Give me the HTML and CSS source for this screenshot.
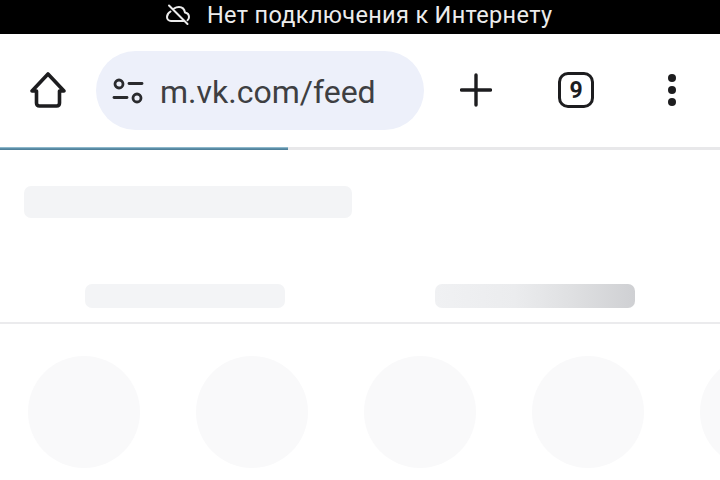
FILE: index.html
```html
<!DOCTYPE html>
<html lang="ru">
<head>
<meta charset="utf-8">
<title>m.vk.com/feed</title>
<link rel="stylesheet" href="styles.css">
</head>
<body>
<div class="status">
  <svg class="cloud" viewBox="0 0 26 26" width="26" height="26" fill="none" stroke="#ececec" stroke-width="2" stroke-linecap="round" stroke-linejoin="round">
    <path d="M5.500 7.500C3.400 8.800 2 10.800 2 13 2 15.400 3.800 17 6 17H18.500"/>
    <path d="M9 4.500C10.500 3.500 12 3 14 3 17.500 3 19.500 5.800 20 8.500 22.500 9 24 11 24 13 24 14.500 23.500 15.500 22.500 16.200"/>
    <path d="M4 1.500 22.500 20"/>
  </svg>
  <span class="status-text">Нет подключения к Интернету</span>
</div>
<header class="toolbar">
  <svg class="home" viewBox="0 0 38 38" width="38" height="38" fill="none" stroke="#1d1d1f" stroke-width="3.600" stroke-linejoin="round" stroke-linecap="round">
    <path d="M19 3 35 20H30.500V32Q30.500 35 27.500 35H10.500Q7.500 35 7.500 32V20H3Z"/>
  </svg>
  <div class="pill">
    <svg class="tune" viewBox="0 0 32 30" width="32" height="30" fill="none" stroke="#2a2b2e" stroke-width="2.800" stroke-linecap="round">
      <circle cx="7" cy="8" r="4"/>
      <path d="M17 7.500H30"/>
      <path d="M2 21.500H15"/>
      <circle cx="25" cy="22" r="4"/>
    </svg>
    <span class="url">m.vk.com/feed</span>
  </div>
  <svg class="plus" viewBox="0 0 32 34" width="32" height="34" fill="none" stroke="#1d1d1f" stroke-width="3.400" stroke-linecap="round">
    <path d="M16 2V32M1.500 17H30.500"/>
  </svg>
  <div class="tabs-count"><span>9</span></div>
  <div class="menu"><i></i><i></i><i></i></div>
</header>
<div class="progress"><div class="progress-fill"></div></div>
<main class="content">
  <div class="sk-title"></div>
  <div class="sk-tabs">
    <div class="sk-tab"></div>
    <div class="sk-tab shimmer"></div>
  </div>
  <div class="divider"></div>
  <div class="stories">
    <div class="story"></div>
    <div class="story"></div>
    <div class="story"></div>
    <div class="story"></div>
    <div class="story"></div>
  </div>
</main>
</body>
</html>
```
FILE: styles.css
```css
* { box-sizing: border-box; }
html, body { margin: 0; padding: 0; }
body {
  width: 720px;
  height: 480px;
  overflow: hidden;
  background: #fff;
  font-family: Roboto, "Liberation Sans", sans-serif;
}
.status {
  height: 34px;
  background: #000;
  display: flex;
  align-items: center;
  padding-left: 165px;
  color: #ececec;
}
.cloud { flex: none; }
.status-text {
  margin-left: 16px;
  margin-top: -4px;
  font-size: 23.500px;
  letter-spacing: 0.33px;
  white-space: nowrap;
  line-height: 28px;
}
.toolbar {
  height: 113px;
  display: flex;
  align-items: flex-start;
  padding-top: 17px;
}
.home { flex: none; margin: 20px 0 0 29px; }
.pill {
  flex: none;
  margin-left: 29px;
  width: 328px;
  height: 79px;
  border-radius: 40px;
  background: #edf0fa;
  display: flex;
  align-items: center;
  padding-left: 16px;
}
.tune { flex: none; }
.url {
  margin-left: 16px;
  margin-top: 3px;
  font-size: 32px;
  color: #3e3f42;
  white-space: nowrap;
}
.plus { flex: none; margin: 22px 0 0 36px; }
.tabs-count {
  flex: none;
  margin: 21px 0 0 66px;
  width: 36px;
  height: 36px;
  border: 3.500px solid #1d1d1f;
  border-radius: 10px;
  display: flex;
  align-items: center;
  justify-content: center;
  font-size: 23px;
  font-weight: 700;
  color: #1d1d1f;
}
.menu {
  flex: none;
  margin: 23px 0 0 74px;
  display: flex;
  flex-direction: column;
  gap: 4px;
}
.menu i {
  display: block;
  width: 8px;
  height: 8px;
  border-radius: 50%;
  background: #1d1d1f;
}
.progress { height: 3px; background: #e8e8ea; }
.progress-fill {
  width: 288px;
  height: 3px;
  background: linear-gradient(180deg, #a5cbdb 0%, #5d8fa8 50%, #4a7a94 100%);
}
.content { padding-top: 36px; }
.sk-title {
  width: 328px;
  height: 32px;
  margin-left: 24px;
  border-radius: 7px;
  background: #f3f4f6;
}
.sk-tabs {
  display: flex;
  margin-top: 66px;
  padding-left: 85px;
  gap: 150px;
}
.sk-tab {
  width: 200px;
  height: 24px;
  border-radius: 7px;
  background: #f3f4f6;
}
.shimmer { background: linear-gradient(90deg, #f0f1f3 0%, #ebecee 40%, #dedfe1 70%, #cfd0d3 100%); }
.divider { height: 2px; margin-top: 14px; background: #ebebed; }
.stories {
  display: flex;
  gap: 56px;
  margin-top: 32px;
  padding-left: 28px;
  overflow: hidden;
}
.story {
  flex: none;
  width: 112px;
  height: 112px;
  border-radius: 50%;
  background: #f9f9fa;
}
```
